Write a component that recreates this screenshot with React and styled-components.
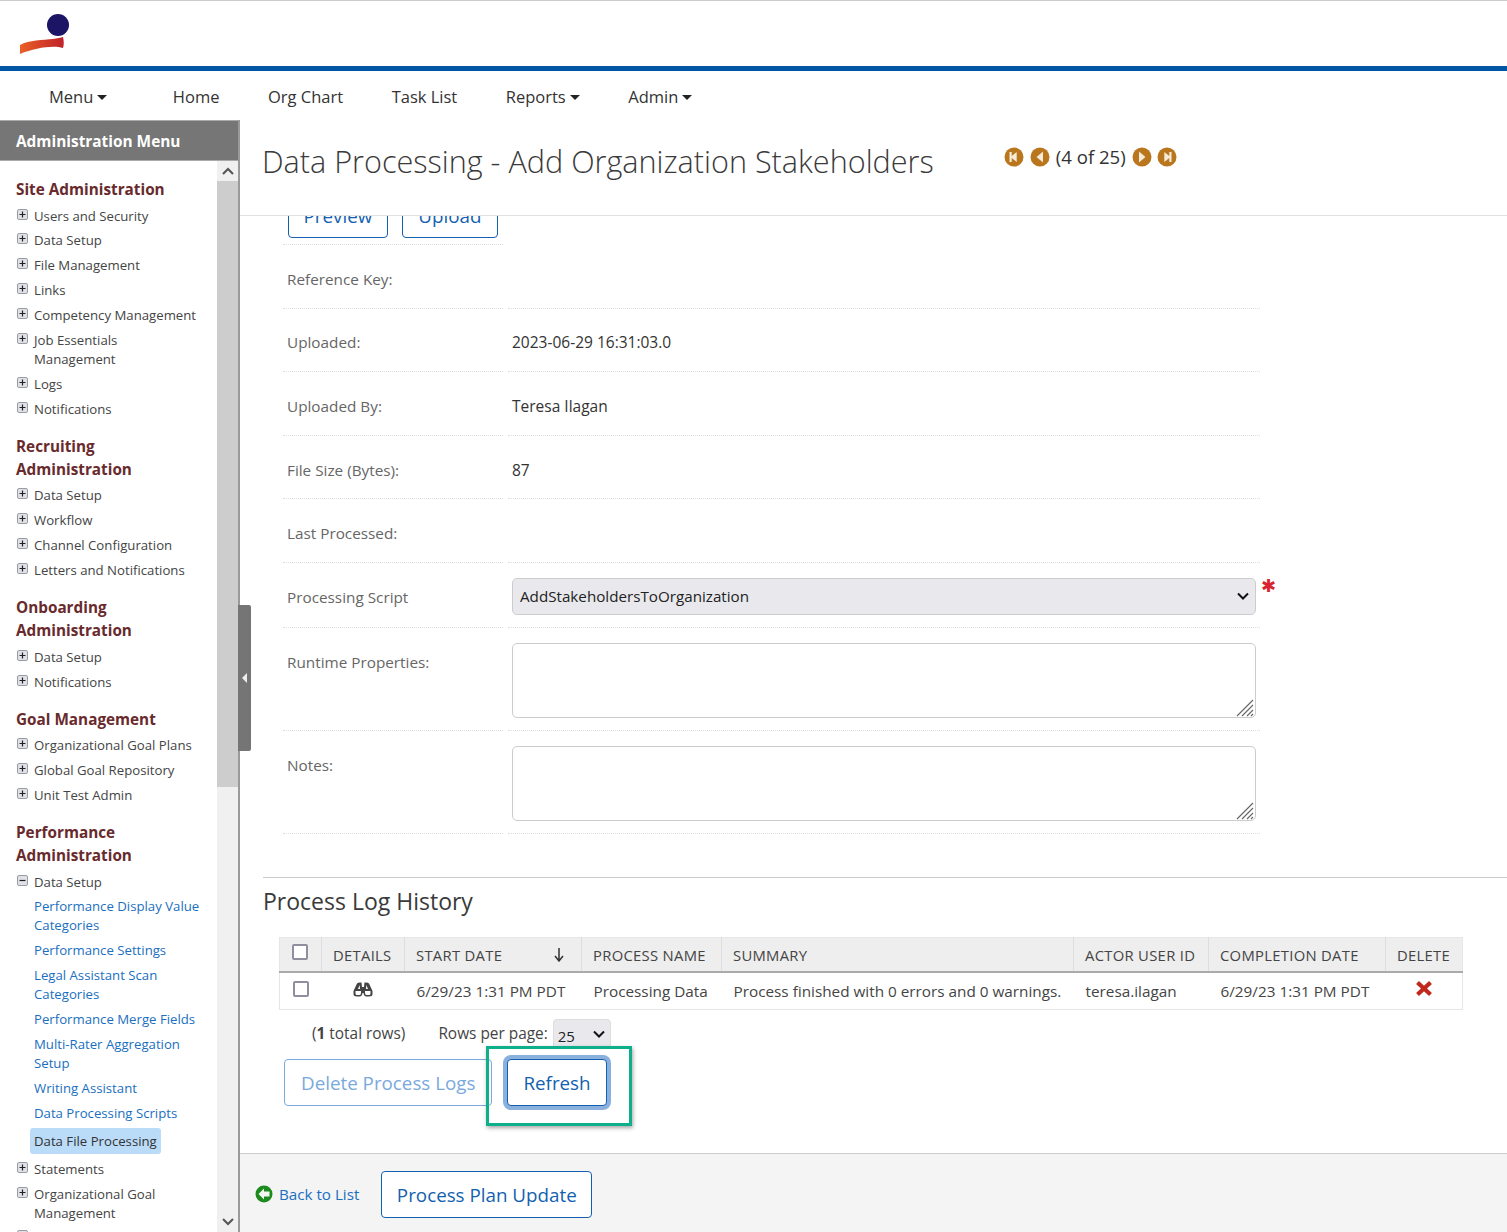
import React from 'react'
import styled, { createGlobalStyle } from 'styled-components'

const GlobalStyle = createGlobalStyle`
  html, body { margin: 0; padding: 0; height: 100%; overflow: hidden; }
  body { font-family: 'Open Sans', 'Liberation Sans', sans-serif; color: #333; background: #fff; }
  * { box-sizing: border-box; }
`

const chevron = "url(\"data:image/svg+xml,%3Csvg xmlns='http://www.w3.org/2000/svg' width='12' height='8'%3E%3Cpath d='M1 1.500l5 5 5-5' fill='none' stroke='%23111' stroke-width='2'/%3E%3C/svg%3E\")"

const sections = [
  { title: ['Site Administration'], items: [
    { label: 'Users and Security' }, { label: 'Data Setup' }, { label: 'File Management' }, { label: 'Links' },
    { label: 'Competency Management' }, { label: ['Job Essentials', 'Management'] }, { label: 'Logs' }, { label: 'Notifications' },
  ] },
  { title: ['Recruiting', 'Administration'], items: [
    { label: 'Data Setup' }, { label: 'Workflow' }, { label: 'Channel Configuration' }, { label: 'Letters and Notifications' },
  ] },
  { title: ['Onboarding', 'Administration'], items: [{ label: 'Data Setup' }, { label: 'Notifications' }] },
  { title: ['Goal Management'], items: [
    { label: 'Organizational Goal Plans' }, { label: 'Global Goal Repository' }, { label: 'Unit Test Admin' },
  ] },
  { title: ['Performance', 'Administration'], items: [
    { label: 'Data Setup', open: true, children: [
      { label: ['Performance Display Value', 'Categories'] },
      { label: 'Performance Settings' },
      { label: ['Legal Assistant Scan', 'Categories'] },
      { label: 'Performance Merge Fields' },
      { label: ['Multi-Rater Aggregation', 'Setup'] },
      { label: 'Writing Assistant' },
      { label: 'Data Processing Scripts' },
      { label: 'Data File Processing', active: true },
    ] },
    { label: 'Statements' }, { label: ['Organizational Goal', 'Management'] }, { label: '' },
  ] },
]

const logRows = [
  { label: 'Reference Key:', value: '' },
  { label: 'Uploaded:', value: '2023-06-29 16:31:03.0' },
  { label: 'Uploaded By:', value: 'Teresa Ilagan' },
  { label: 'File Size (Bytes):', value: '87' },
  { label: 'Last Processed:', value: '' },
]

const Page = styled.div`
  height: 100vh;
  display: flex;
  flex-direction: column;
  overflow: hidden;
  border-top: 1px solid #ccc;
`
const Brand = styled.div`
  height: 70px;
  flex: none;
  padding: 11px 0 0 19px;
  border-bottom: 5px solid #0055a5;
`
const Nav = styled.nav`
  height: 49px;
  flex: none;
  display: flex;
  align-items: center;
  gap: 48.5px;
  padding: 2px 0 0 49px;
  font-size: 16.5px;
  color: #333;
`
const NavItem = styled.span`
  display: inline-flex;
  align-items: center;
  gap: 4px;
  margin-right: ${(p) => p.$extra || 0}px;
`
const Caret = styled.i`
  width: 0;
  height: 0;
  border-left: 5px solid transparent;
  border-right: 5px solid transparent;
  border-top: 5px solid #222;
  margin-top: 2px;
`
const Body = styled.div`
  flex: 1;
  min-height: 0;
  display: flex;
`
const Sidebar = styled.aside`
  width: 240px;
  flex: none;
  display: flex;
  flex-direction: column;
  position: relative;
  border-right: 2px solid #9a9a9a;
`
const SideHead = styled.div`
  height: 41px;
  flex: none;
  background: #767676;
  border-top: 1px solid #aaa;
  border-bottom: 1px solid #aaa;
  color: #fff;
  font-size: 15.4px;
  font-weight: 700;
  line-height: 41px;
  padding-left: 16px;
`
const SideBody = styled.div`
  flex: 1;
  min-height: 0;
  display: flex;
`
const SideList = styled.div`
  flex: 1;
  min-width: 0;
  overflow: hidden;
  padding: 17px 0 0 16px;
`
const Section = styled.section`
  margin-bottom: 16px;
`
const SectionTitle = styled.h3`
  margin: 0 0 5.6px;
  font-size: 15.3px;
  line-height: 23px;
  font-weight: 700;
  color: #682a2c;
`
const TreeRow = styled.div`
  display: flex;
  align-items: flex-start;
  gap: 6px;
  font-size: 13.2px;
  line-height: 19px;
  color: #444;
  margin-bottom: 5.9px;
  margin-left: 1px;
  min-height: 19px;
  white-space: nowrap;
`
const TreeIcon = styled.svg`
  width: 11px;
  height: 11px;
  flex: none;
  margin-top: 2px;
`
const SubList = styled.div`
  margin-left: 18px;
`
const SubRow = styled.div`
  font-size: 13.2px;
  line-height: 19px;
  margin-bottom: 5.9px;
  white-space: nowrap;
  color: #1a6fc0;
`
const ActiveRow = styled.div`
  width: fit-content;
  margin: -1px 0 6px -4px;
  padding: 4px 4px 3px;
  border-radius: 3px;
  background: #bbdcf8;
  font-size: 13.2px;
  line-height: 19px;
  white-space: nowrap;
  color: #333;
`
const Scrollbar = styled.div`
  width: 21px;
  flex: none;
  display: flex;
  flex-direction: column;
  background: #f0f0f0;
`
const ScrollArrow = styled.div`
  height: 20px;
  flex: none;
  display: flex;
  align-items: center;
  justify-content: center;
`
const ScrollThumb = styled.div`
  height: 606px;
  flex: none;
  background: #cdcdcd;
`
const ScrollRest = styled.div`
  flex: 1;
`
const Collapse = styled.div`
  position: absolute;
  left: 238px;
  top: 485px;
  width: 13px;
  height: 146px;
  background: #757575;
  border-radius: 0 2px 2px 0;
  display: flex;
  align-items: center;
  justify-content: center;
  &::after {
    content: '';
    border-top: 5px solid transparent;
    border-bottom: 5px solid transparent;
    border-right: 5px solid #eee;
  }
`
const Main = styled.main`
  flex: 1;
  min-width: 0;
  display: flex;
  flex-direction: column;
`
const TitleBar = styled.div`
  height: 96px;
  flex: none;
  display: flex;
  align-items: flex-start;
  padding: 18px 0 0 22px;
  border-bottom: 1px solid #e2e2e2;
`
const Title = styled.h1`
  margin: 0;
  font-size: 30.6px;
  line-height: 46px;
  font-weight: 300;
  color: #3a3a3a;
  white-space: nowrap;
`
const Pager = styled.div`
  margin: 5px 0 0 70px;
  display: flex;
  align-items: center;
  height: 27px;
  font-size: 18.6px;
  color: #333;
`
const PagerIcon = styled.svg`
  width: 20px;
  height: 20px;
  margin: ${(p) => p.$margin || '0'};
  flex: none;
`
const Scroller = styled.div`
  flex: 1;
  min-height: 0;
  overflow: hidden;
`
const Content = styled.div`
  margin-top: -25px;
`
const TopButtons = styled.div`
  display: flex;
  gap: 14px;
  padding-left: 1px;
`
const FormArea = styled.div`
  padding-left: 43px;
  width: 1021px;
`
const FormRow = styled.div`
  display: grid;
  grid-template-columns: 220px 752px;
  gap: 5px;
  height: ${(p) => p.$h}px;
`
const Cell = styled.div`
  height: 100%;
  border-bottom: 1px dotted #ddd;
  display: flex;
  align-items: ${(p) => (p.$top ? 'flex-start' : 'center')};
  padding-left: 4px;
  padding-top: ${(p) => p.$pt ?? 5}px;
  font-size: ${(p) => (p.$value ? 15.5 : 15.3)}px;
  color: ${(p) => (p.$value ? '#333' : '#666')};
  position: relative;
`
const Pick = styled.select`
  appearance: none;
  width: 744px;
  height: 37px;
  border: 1px solid #ccc;
  border-radius: 5px;
  background: #e9e9ed ${chevron} no-repeat right 6px center;
  font: inherit;
  font-size: 15.2px;
  color: #222;
  padding-left: 7px;
`
const Star = styled.span`
  position: absolute;
  left: 753px;
  top: 13px;
  color: #d9232e;
  font-size: 18px;
  line-height: 20px;
  font-family: 'DejaVu Sans', sans-serif;
`
const AreaWrap = styled.div`
  position: relative;
  width: 744px;
  height: 75px;
`
const Area = styled.textarea`
  width: 100%;
  height: 100%;
  border: 1px solid #ccc;
  border-radius: 5px;
  background: #fff;
  display: block;
  resize: none;
`
const Grip = styled.svg`
  position: absolute;
  right: 2px;
  bottom: 1px;
  width: 18px;
  height: 18px;
`
const LogSection = styled.section`
  margin: 43px 0 0 23px;
  border-top: 1px solid #ccc;
`
const LogTitle = styled.h2`
  margin: 0;
  font-size: 23px;
  line-height: 32px;
  font-weight: 400;
  padding-top: 7px;
  color: #3a3a3a;
`
const Grid = styled.table`
  margin: 20px 0 0 16px;
  width: 1183px;
  table-layout: fixed;
  border-collapse: collapse;
  border: 1px solid #e6e6e6;
`
const Th = styled.th`
  width: ${(p) => p.$w}px;
  height: 35px;
  padding: 0 0 0 11px;
  background: #eee;
  border-right: 1px solid #ddd;
  border-bottom: 2px solid #aaa;
  font-size: 14.8px;
  font-weight: 400;
  letter-spacing: 0.3px;
  text-align: left;
  color: #444;
  white-space: nowrap;
  &:last-child { border-right: 0; }
`
const ThInner = styled.div`
  display: flex;
  align-items: center;
  justify-content: space-between;
  padding-right: 17px;
`
const Td = styled.td`
  height: 37px;
  padding: 0 0 ${(p) => (p.$center ? 1 : 0)}px ${(p) => (p.$center ? 0 : 12)}px;
  font-size: 15.3px;
  color: #444;
  white-space: nowrap;
  text-align: ${(p) => (p.$center ? 'center' : 'left')};
`
const Check = styled.input.attrs({ type: 'checkbox' })`
  appearance: none;
  width: 16px;
  height: 16px;
  margin: -5px 0 0 1px;
  display: block;
  background: #fff;
  border: 2px solid #8f8f9d;
  border-radius: 2px;
`
const Paging = styled.div`
  display: flex;
  align-items: center;
  height: 40px;
  margin: 4px 0 0 49px;
  font-size: 15.4px;
  color: #444;
`
const Rows = styled.span`
  margin: 0 5px 0 33px;
`
const SmallPick = styled.select`
  appearance: none;
  width: 58px;
  height: 30px;
  padding: 4px 0 0 4px;
  border: 1px solid #ddd;
  border-radius: 4px;
  background: #e9e9ed ${chevron} no-repeat right 5px center;
  font: inherit;
  font-size: 15px;
  color: #222;
`
const ActionRow = styled.div`
  display: flex;
  align-items: center;
  gap: 15px;
  margin: 5px 0 0 21px;
  position: relative;
`
const Button = styled.button`
  height: 47px;
  padding: 2px ${(p) => p.$px || 16}px 0;
  border-radius: 4px;
  background: #fff;
  font-family: inherit;
  font-size: 18.8px;
  white-space: nowrap;
  color: ${(p) => (p.$off ? '#7aa9dd' : '#135fb0')};
  border: 1px solid ${(p) => (p.$off ? '#7aa9dd' : '#135fb0')};
  box-shadow: ${(p) => (p.$ring ? '0 0 0 4px #8ab0de' : 'none')};
`
const Callout = styled.div`
  position: absolute;
  left: 202px;
  top: -13px;
  width: 146px;
  height: 80px;
  border: 3px solid #0eb08b;
  box-shadow: 1px 2px 4px rgba(0, 0, 0, 0.35);
  pointer-events: none;
`
const Footer = styled.footer`
  height: 79px;
  flex: none;
  display: flex;
  align-items: center;
  padding: 2px 0 0 15px;
  background: #f4f4f4;
  border-top: 1px solid #ccc;
`
const BackLink = styled.a`
  display: inline-flex;
  align-items: center;
  gap: 6px;
  margin: 0 22px 0 0;
  font-size: 15.2px;
  color: #1a6fc0;
`

const Tree = ({ open }) => (
  <TreeIcon viewBox="0 0 11 11">
    <rect x="0.5" y="0.5" width="10" height="10" rx="1.5" fill="#dfe1e6" stroke="#9a9ca3" />
    <path d={open ? 'M2.5 5.5h6' : 'M2.5 5.5h6M5.5 2.5v6'} stroke="#222" strokeWidth="1.2" />
  </TreeIcon>
)

const PagerGlyph = ({ d, margin }) => (
  <PagerIcon viewBox="0 0 20 20" $margin={margin}>
    <circle cx="10" cy="10" r="9.5" fill="#b9761c" />
    <path d={d} fill="#f6ead8" />
  </PagerIcon>
)

const ResizeGrip = () => (
  <Grip viewBox="0 0 18 18">
    <path d="M1 17L17 1M6 17L17 6M11 17l6-6M15 17l2-2" stroke="#666" strokeWidth="1.100" />
  </Grip>
)

const Logo = () => (
  <svg width="52" height="44" viewBox="0 0 52 44">
    <defs>
      <linearGradient id="swoosh" x1="0" x2="1" y1="0" y2="0">
        <stop offset="0" stopColor="#ea5f26" />
        <stop offset="1" stopColor="#c0222a" />
      </linearGradient>
    </defs>
    <circle cx="39" cy="13" r="11" fill="#1c1464" />
    <path d="M1 42 L1 33 C10 28 24 28 34 27 C38 26 42 26 44 25 C45 29 45 33 44 36 C34 33 16 36 1 42Z" fill="url(#swoosh)" />
  </svg>
)

const Label = ({ text }) => (Array.isArray(text) ? text.map((t) => <div key={t}>{t}</div>) : text)

export default function App() {
  return (
    <Page>
      <GlobalStyle />
      <Brand><Logo /></Brand>
      <Nav>
        <NavItem $extra={17}>Menu <Caret /></NavItem>
        <NavItem>Home</NavItem>
        <NavItem>Org Chart</NavItem>
        <NavItem>Task List</NavItem>
        <NavItem>Reports <Caret /></NavItem>
        <NavItem>Admin <Caret /></NavItem>
      </Nav>
      <Body>
        <Sidebar>
          <SideHead>Administration Menu</SideHead>
          <SideBody>
            <SideList>
              {sections.map((s) => (
                <Section key={s.title.join(' ')}>
                  <SectionTitle><Label text={s.title} /></SectionTitle>
                  {s.items.map((item) => (
                    <React.Fragment key={String(item.label)}>
                      <TreeRow>
                        <Tree open={item.open} />
                        <div><Label text={item.label} /></div>
                      </TreeRow>
                      {item.children && (
                        <SubList>
                          {item.children.map((c) => (c.active
                            ? <ActiveRow key={c.label}>{c.label}</ActiveRow>
                            : <SubRow key={String(c.label)}><Label text={c.label} /></SubRow>))}
                        </SubList>
                      )}
                    </React.Fragment>
                  ))}
                </Section>
              ))}
            </SideList>
            <Scrollbar>
              <ScrollArrow>
                <svg width="12" height="8" viewBox="0 0 12 8"><path d="M1 7l5-5 5 5" fill="none" stroke="#555" strokeWidth="2" /></svg>
              </ScrollArrow>
              <ScrollThumb />
              <ScrollRest />
              <ScrollArrow>
                <svg width="12" height="8" viewBox="0 0 12 8"><path d="M1 1l5 5 5-5" fill="none" stroke="#555" strokeWidth="2" /></svg>
              </ScrollArrow>
            </Scrollbar>
          </SideBody>
          <Collapse />
        </Sidebar>
        <Main>
          <TitleBar>
            <Title>Data Processing - Add Organization Stakeholders</Title>
            <Pager>
              <PagerGlyph d="M5.5 5h2.2v4l5-4v10l-5-4v4H5.5z" margin="0 6px 0 0" />
              <PagerGlyph d="M13 4.5v11L6.5 10z" margin="0 6px 0 0" />
              (4 of 25)
              <PagerGlyph d="M7 4.5v11L13.500 10z" margin="0 5px 0 6px" />
              <PagerGlyph d="M14.500 5h-2.200v4l-5-4v10l5-4v4h2.200z" />
            </Pager>
          </TitleBar>
          <Scroller>
            <Content>
              <FormArea>
                <FormRow $h={54}>
                  <Cell $top $pt={0}>
                    <TopButtons>
                      <Button $px={14.5}>Preview</Button>
                      <Button $px={15.5}>Upload</Button>
                    </TopButtons>
                  </Cell>
                </FormRow>
                {logRows.map((r) => (
                  <FormRow key={r.label} $h={63.600}>
                    <Cell>{r.label}</Cell>
                    <Cell $value>{r.value}</Cell>
                  </FormRow>
                ))}
                <FormRow $h={65}>
                  <Cell>Processing Script</Cell>
                  <Cell $value $pt={3}>
                    <Pick defaultValue="a"><option value="a">AddStakeholdersToOrganization</option></Pick>
                    <Star>✱</Star>
                  </Cell>
                </FormRow>
                <FormRow $h={103}>
                  <Cell $top $pt={24}>Runtime Properties:</Cell>
                  <Cell $value $top $pt={15}><AreaWrap><Area /><ResizeGrip /></AreaWrap></Cell>
                </FormRow>
                <FormRow $h={103}>
                  <Cell $top $pt={24}>Notes:</Cell>
                  <Cell $value $top $pt={15}><AreaWrap><Area /><ResizeGrip /></AreaWrap></Cell>
                </FormRow>
              </FormArea>
              <LogSection>
                <LogTitle>Process Log History</LogTitle>
                <Grid>
                  <thead>
                    <tr>
                      <Th $w={42}><Check /></Th>
                      <Th $w={83}>DETAILS</Th>
                      <Th $w={177}><ThInner>START DATE<svg width="10" height="14" viewBox="0 0 10 14"><path d="M5 0v12M1 8l4 5 4-5" fill="none" stroke="#333" strokeWidth="1.500" /></svg></ThInner></Th>
                      <Th $w={140}>PROCESS NAME</Th>
                      <Th $w={352}>SUMMARY</Th>
                      <Th $w={135}>ACTOR USER ID</Th>
                      <Th $w={177}>COMPLETION DATE</Th>
                      <Th $w={77}>DELETE</Th>
                    </tr>
                  </thead>
                  <tbody>
                    <tr>
                      <Td><Check /></Td>
                      <Td $center>
                        <svg width="20" height="15" viewBox="0 0 20 15">
                          <path
                            fillRule="evenodd"
                            fill="#444"
                            d="M.5 9L4 1.500Q5 .5 7 .5H8.500L9 5h2L11.500 .5H13Q15 .5 16 1.500L19.500 9v3Q19.500 14.500 16 14.500H13.500Q11 14.500 10.500 11h-1Q9 14.500 6.500 14.500H4Q.5 14.500 .5 12zM2.500 9v2.500Q2.500 13 4 13H6.500Q8 13 8 11V9zM12 9v2Q12 13 13.500 13H16Q17.500 13 17.500 11.500V9zM5 7H7L6.700 3zM15 7H13L13.300 3z"
                          />
                        </svg>
                      </Td>
                      <Td>6/29/23 1:31 PM PDT</Td>
                      <Td>Processing Data</Td>
                      <Td>Process finished with 0 errors and 0 warnings.</Td>
                      <Td>teresa.ilagan</Td>
                      <Td>6/29/23 1:31 PM PDT</Td>
                      <Td $center>
                        <svg width="18" height="17" viewBox="0 0 18 17"><path d="M2.500 2.500L15.500 14.500M15.500 2.500L2.500 14.500" stroke="#c0281c" strokeWidth="4.200" /></svg>
                      </Td>
                    </tr>
                  </tbody>
                </Grid>
                <Paging>
                  <span>(<b>1</b> total rows)</span>
                  <Rows>Rows per page:</Rows>
                  <SmallPick defaultValue="25"><option value="25">25</option></SmallPick>
                </Paging>
                <ActionRow>
                  <Button $off>Delete Process Logs</Button>
                  <Button $ring $px={15}>Refresh</Button>
                  <Callout />
                </ActionRow>
              </LogSection>
            </Content>
          </Scroller>
          <Footer>
            <BackLink>
              <svg width="18" height="18" viewBox="0 0 18 18">
                <circle cx="9" cy="9" r="8.500" fill="#1d8a1d" />
                <path d="M9 3.500L3.500 9 9 14.500v-3h5.500v-5H9z" fill="#f2f7f2" />
              </svg>
              Back to List
            </BackLink>
            <Button $px={14.5}>Process Plan Update</Button>
          </Footer>
        </Main>
      </Body>
    </Page>
  )
}
